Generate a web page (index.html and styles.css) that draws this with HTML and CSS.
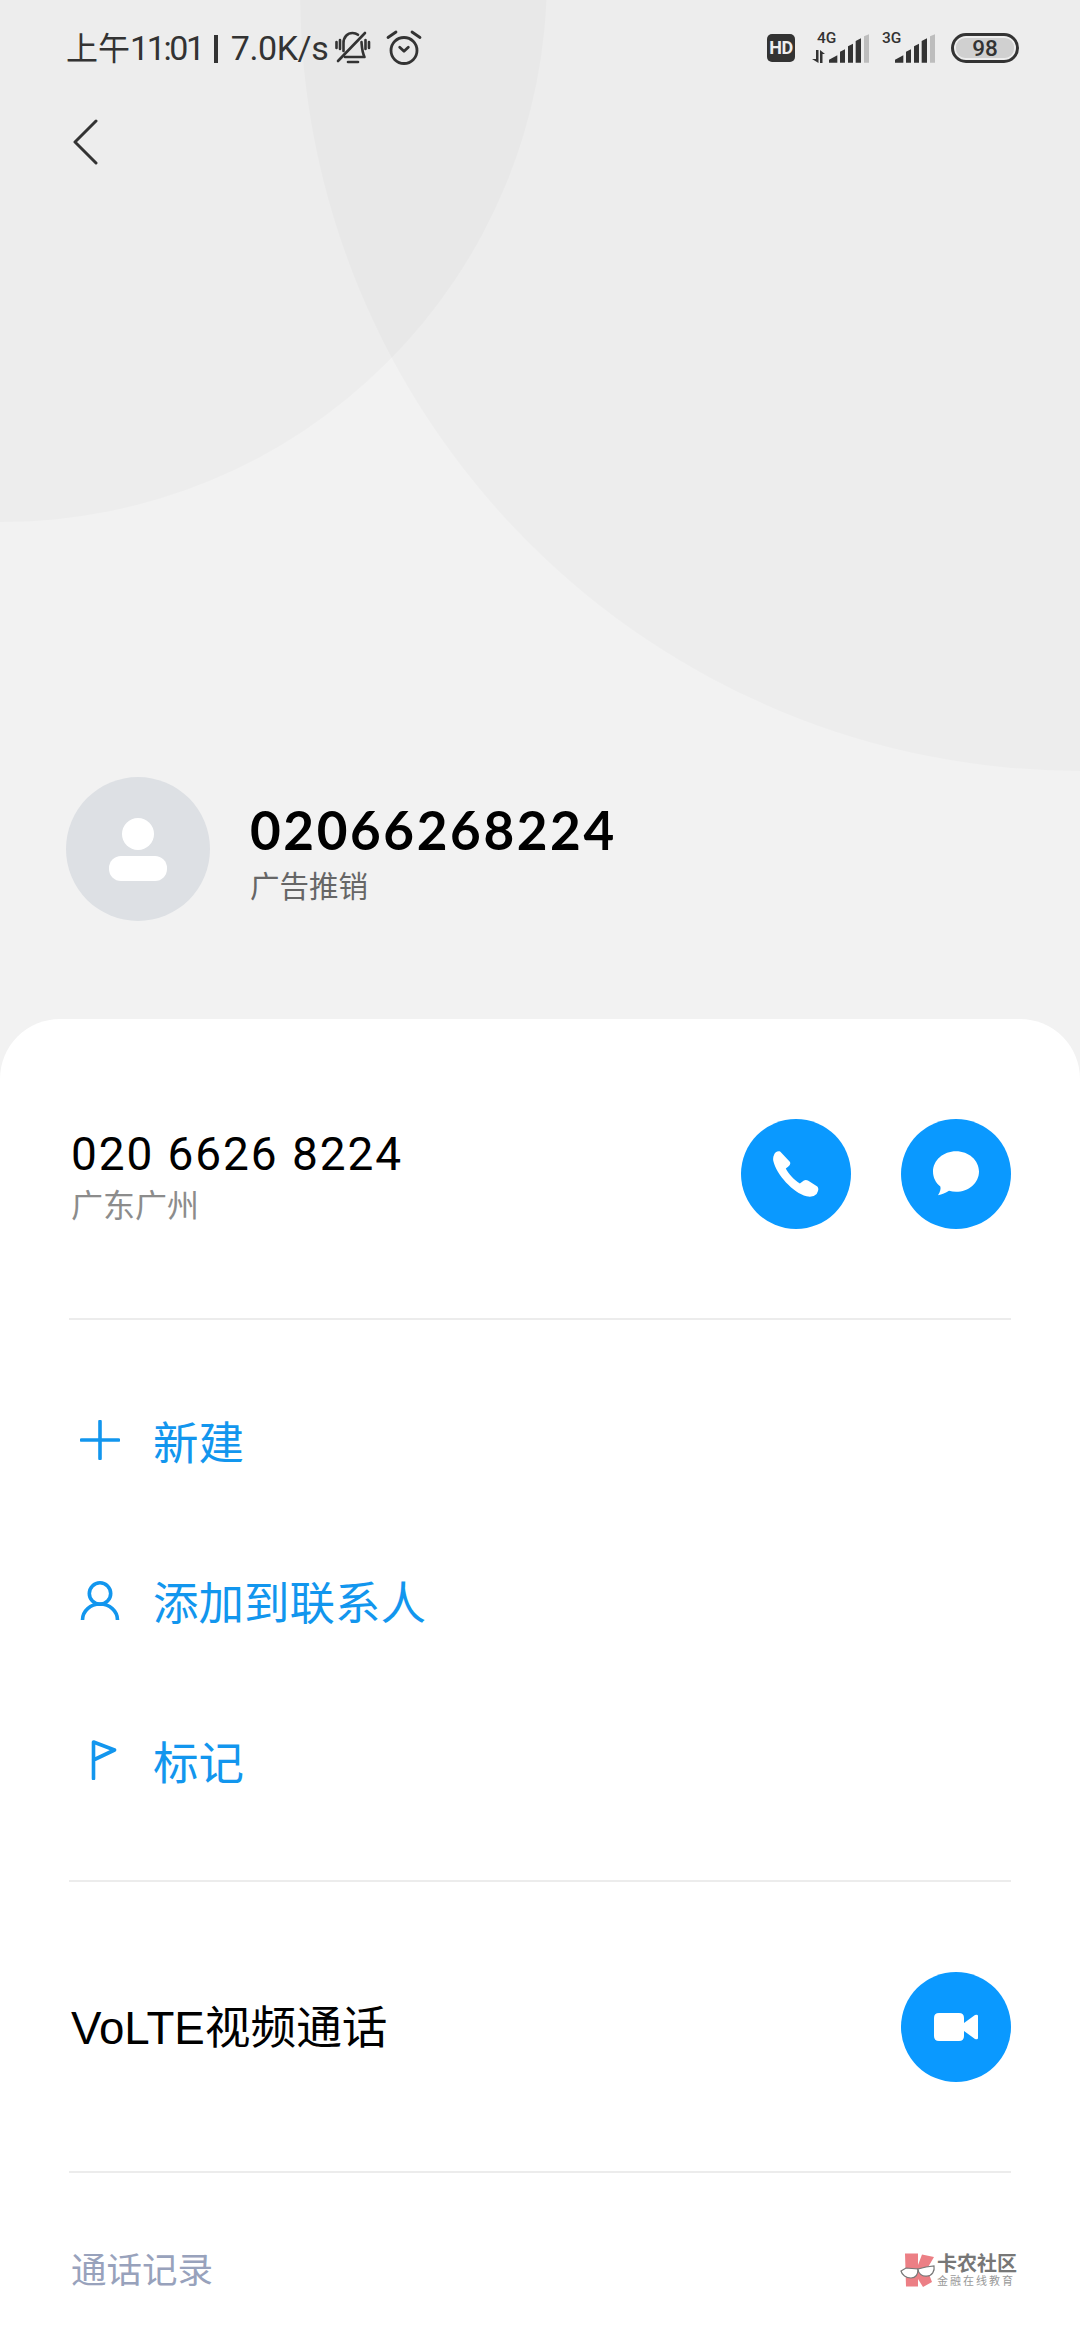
FILE: index.html
```html
<!DOCTYPE html>
<html lang="zh-CN">

<head>
    <meta charset="UTF-8">
    <meta name="viewport" content="width=device-width, initial-scale=1.0">
    <title>02066268224</title>
    <link rel="stylesheet" href="styles.css">
</head>

<body>
    <div class="screen">
        <header class="top">
            <div class="statusbar">
                <div class="status-left">
                    <span class="clock">上午<span class="clock-time">11:01</span></span>
                    <span class="speed-sep"></span>
                    <span class="speed">7.0K/s</span>
                    <!-- muted bell -->
                    <svg class="ic-bell" viewBox="0 0 36 36">
                        <g fill="none" stroke="#333" stroke-width="2.6" stroke-linecap="round" stroke-linejoin="round">
                            <path d="M8.500 21V13c0-6 4-10 9-10 2 0 4 .6 5.500 1.800" />
                            <path d="M26.500 12c.5 6 .5 10 3 15H10" />
                            <path d="M13 32h10" />
                            <path d="M1.500 12v6M5 10v9M30.500 10v9M34 12v6" />
                            <path d="M3 31L30 3" />
                        </g>
                    </svg>
                    <!-- alarm -->
                    <svg class="ic-alarm" viewBox="0 0 36 36">
                        <g fill="none" stroke="#333" stroke-width="2.800" stroke-linecap="round" stroke-linejoin="round">
                            <circle cx="18" cy="20.500" r="13" />
                            <path d="M13.700 17.300l4.300 4 4.300-4" />
                            <path d="M2 7.500L10 2M34 7.500L26 2" />
                        </g>
                    </svg>
                </div>
                <div class="status-right">
                    <span class="hd">HD</span>
                    <div class="signal sig-4g">
                        <span class="net">4G</span>
                        <svg class="arrows" viewBox="0 0 13 13">
                            <path d="M4 0h2.500v13L0 9h4zM8 13V0l5 4h-2.500v9z" fill="#333" />
                        </svg>
                        <svg class="bars" viewBox="0 0 120 85">
                            <path d="M0 76l25-13v22H0zM33 52l15-7v40H33zM57 36l15-8v57H57zM80 20l16-8v73H80z" fill="#333" />
                            <path d="M105 6l15-6v85h-15z" fill="#bdbdbd" />
                        </svg>
                    </div>
                    <div class="signal sig-3g">
                        <span class="net">3G</span>
                        <svg class="bars" viewBox="0 0 120 85">
                            <path d="M0 76l25-13v22H0zM33 52l15-7v40H33zM57 36l15-8v57H57zM80 20l16-8v73H80z" fill="#333" />
                            <path d="M105 6l15-6v85h-15z" fill="#bdbdbd" />
                        </svg>
                    </div>
                    <div class="battery"><span>98</span></div>
                </div>
            </div>

            <svg class="back" viewBox="0 0 26 46">
                <path d="M24 2L3 23l21 21" fill="none" stroke="#333" stroke-width="3" stroke-linecap="round" stroke-linejoin="round" />
            </svg>

            <div class="caller">
                <div class="avatar">
                    <span class="avatar-head"></span>
                    <span class="avatar-body"></span>
                </div>
                <div class="caller-info">
                    <div class="caller-num">02066268224</div>
                    <div class="caller-tag">广告推销</div>
                </div>
            </div>
        </header>

        <main class="card">
            <section class="number-row">
                <div class="number-text">
                    <div class="number">020 6626 8224</div>
                    <div class="place">广东广州</div>
                </div>
                <div class="actions">
                    <div class="round-btn">
                        <svg viewBox="0 0 137 137" class="ic-phone">
                            <path d="M3 12C5 4 15-2 22 2L50 32Q56 40 38 52C46 68 62 85 80 97L92 88Q98 84 104 88L132 106Q139 114 130 128Q120 139 100 135C60 125 10 70 1 30Q-1 20 3 12Z" fill="#fff" />
                        </svg>
                    </div>
                    <div class="round-btn">
                        <svg viewBox="0 0 138 134" class="ic-msg">
                            <path d="M69 0C107 0 138 27 138 61S107 122 69 122C62 122 55 121 48 119C38 125 27 130 15 132C22 122 24 112 22 106C8 95 0 79 0 61C0 27 31 0 69 0Z" fill="#fff" />
                        </svg>
                    </div>
                </div>
            </section>

            <section class="menu">
                <div class="menu-item">
                    <svg class="menu-ic" viewBox="0 0 40 40">
                        <path d="M1.500 20h37M20 1.500v37" fill="none" stroke="#1296ee" stroke-width="3.600" stroke-linecap="round" />
                    </svg>
                    <span>新建</span>
                </div>
                <div class="menu-item">
                    <svg class="menu-ic" viewBox="0 0 40 40">
                        <g fill="none" stroke="#1296ee" stroke-width="3.600">
                            <circle cx="20" cy="13.500" r="10.700" />
                            <path d="M2.500 40c0-9 8-16 17.500-16s17.500 7 17.500 16" />
                        </g>
                    </svg>
                    <span>添加到联系人</span>
                </div>
                <div class="menu-item">
                    <svg class="menu-ic" viewBox="0 0 40 40">
                        <path d="M13.500 38.500V2l21 8-21 10" fill="none" stroke="#1296ee" stroke-width="3.600" stroke-linecap="round" stroke-linejoin="round" />
                    </svg>
                    <span>标记</span>
                </div>
            </section>

            <section class="video-row">
                <div class="video-label">VoLTE视频通话</div>
                <div class="round-btn">
                    <svg viewBox="0 0 44 28" class="ic-video">
                        <path d="M5 0h20q5 0 5 5v18q0 5-5 5H5q-5 0-5-5V5q0-5 5-5zM30 10l11-8q3-1 3 1v22q0 2-3 1l-11-8z" fill="#fff" />
                    </svg>
                </div>
            </section>

            <section class="history">
                <div class="history-title">通话记录</div>
                <div class="watermark">
                    <svg class="wm-logo" viewBox="0 0 36 36">
                        <path d="M5 .5H18V12L22 1.500 34 4 27 16 32 29 23 34 18 26V33.500H6Z" fill="#ec7f85" />
                        <g fill="#fff" stroke="#777" stroke-width="1.200">
                            <path d="M1 18l5-3 12 1c0 5-2 9-7 9-5 0-9-3-10-7z" />
                            <path d="M18 16l8-2 8-1c1 5-2 10-7 10-5 1-9-3-9-7z" />
                        </g>
                    </svg>
                    <div class="wm-text">
                        <div class="wm-name">卡农社区</div>
                        <div class="wm-sub">金融在线教育</div>
                    </div>
                </div>
            </section>
        </main>
    </div>
</body></html>
```

FILE: styles.css
```css
* {
    box-sizing: border-box;
}

body {
    margin: 0;
    background: #fff;
    font-family: Roboto, "Noto Sans CJK SC", sans-serif;
}

.screen {
    position: relative;
    width: 1080px;
    height: 2340px;
    overflow: hidden;
    display: flex;
    flex-direction: column;
    background: #f2f2f2;
}

/* the two big pale circles behind the header */
.screen::before,
.screen::after {
    content: "";
    position: absolute;
    border-radius: 50%;
    background: rgba(0, 0, 0, .018);
}

.screen::before {
    left: 300px;
    top: -789px;
    width: 1560px;
    height: 1560px;
}

.screen::after {
    left: -543px;
    top: -568px;
    width: 1090px;
    height: 1090px;
}

/* top part */
.top {
    position: relative;
    z-index: 1;
    height: 1019px;
    flex: none;
    display: flex;
    flex-direction: column;
}

.statusbar {
    height: 96px;
    padding: 0 61px 0 66px;
    display: flex;
    justify-content: space-between;
    align-items: center;
    color: #333;
}

.status-left {
    display: flex;
    align-items: center;
    font-size: 32px;
    line-height: 40px;
}

.clock-time {
    font-size: 34px;
    letter-spacing: -2.4px;
}

.speed-sep {
    width: 4px;
    height: 28px;
    background: #333;
    margin: 2px 13px 0 11px;
}

.speed {
    font-size: 34px;
    letter-spacing: -.4px;
}

.ic-bell {
    width: 36px;
    height: 36px;
    margin-left: 7px;
}

.ic-alarm {
    width: 36px;
    height: 36px;
    margin-left: 15px;
}

.status-right {
    display: flex;
    align-items: center;
}

.hd {
    width: 28px;
    height: 28px;
    border-radius: 5px;
    background: #333;
    color: #eee;
    font-size: 18px;
    font-weight: 700;
    line-height: 28px;
    text-align: center;
    letter-spacing: -.5px;
}

.signal {
    position: relative;
    height: 30px;
    display: flex;
    align-items: flex-end;
    justify-content: flex-end;
}

.sig-4g {
    width: 57px;
    margin-left: 17px;
}

.sig-3g {
    width: 53px;
    margin-left: 13px;
}

.net {
    position: absolute;
    top: -3px;
    left: 5px;
    font-size: 15.500px;
    line-height: 16px;
    font-weight: 500;
}

.sig-3g .net {
    left: 0;
}

.arrows {
    position: absolute;
    left: 0;
    bottom: 0;
    width: 13px;
    height: 13px;
}

.bars {
    width: 40px;
    height: 29px;
}

.battery {
    width: 68px;
    height: 30px;
    margin-left: 16px;
    padding: 2px;
    border: 3px solid #333;
    border-radius: 15px;
    display: flex;
}

.battery span {
    flex: 1;
    border-radius: 9px;
    background: #d0d0d0;
    font-size: 22.500px;
    font-weight: 500;
    line-height: 20px;
    text-align: center;
}

.back {
    width: 26px;
    height: 46px;
    margin: 23px 0 0 72px;
}

.caller {
    display: flex;
    align-items: center;
    margin: 612px 0 0 66px;
}

.avatar {
    width: 144px;
    height: 144px;
    border-radius: 50%;
    background: #dde0e4;
    display: flex;
    flex-direction: column;
    align-items: center;
    justify-content: center;
    gap: 6px;
}

.avatar-head {
    width: 32px;
    height: 32px;
    border-radius: 50%;
    background: #fff;
}

.avatar-body {
    width: 58px;
    height: 25px;
    border-radius: 12px;
    background: #fff;
}

.caller-info {
    margin: 9px 0 0 40px;
}

.caller-num {
    font-family: Lato, "Noto Sans", sans-serif;
    font-size: 53px;
    font-weight: 700;
    line-height: 60px;
    letter-spacing: 2.6px;
    color: #000;
}

.caller-tag {
    margin-top: 6px;
    font-size: 29.500px;
    line-height: 42px;
    color: #666;
}

/* white card */
.card {
    position: relative;
    z-index: 1;
    flex: 1;
    background: #fff;
    border-radius: 60px 60px 0 0;
    padding: 0 69px;
}

.number-row {
    height: 301px;
    display: flex;
    justify-content: space-between;
    align-items: center;
    padding-left: 2px;
    border-bottom: 2px solid #ececec;
}

.number-text {
    margin-top: 16px;
}

.number {
    font-size: 46px;
    line-height: 56px;
    letter-spacing: 1.9px;
    color: #000;
}

.place {
    margin-top: 3px;
    font-size: 32px;
    line-height: 42px;
    color: #8c8c8c;
}

.actions {
    display: flex;
    gap: 50px;
    margin-top: 10px;
}

.round-btn {
    width: 110px;
    height: 110px;
    border-radius: 50%;
    background: #0a99ff;
    display: flex;
    align-items: center;
    justify-content: center;
}

.ic-phone {
    width: 46px;
    height: 46px;
}

.ic-msg {
    width: 46px;
    height: 45px;
}

.ic-video {
    width: 44px;
    height: 28px;
}

.menu {
    padding: 40px 0;
    border-bottom: 2px solid #ececec;
}

.menu-item {
    height: 160px;
    display: flex;
    align-items: center;
    font-size: 45.500px;
    color: #1296ee;
}

.menu-item span {
    margin-left: 33px;
}

.menu-ic {
    width: 40px;
    height: 40px;
    margin-left: 11px;
    flex: none;
}

.video-row {
    height: 291px;
    display: flex;
    justify-content: space-between;
    align-items: center;
    border-bottom: 2px solid #ececec;
    padding-left: 2px;
}

.video-label {
    margin-top: -5px;
    font-family: "Liberation Sans", "Noto Sans CJK SC", sans-serif;
    font-size: 45.700px;
    color: #000;
}

.history {
    display: flex;
    justify-content: space-between;
    align-items: center;
    padding: 74px 0 0 2px;
}

.history-title {
    font-size: 35.500px;
    line-height: 48px;
    color: #98a2bc;
}

.watermark {
    display: flex;
    align-items: center;
    margin-right: -6px;
}

.wm-logo {
    width: 36px;
    height: 36px;
}

.wm-text {
    margin-left: 1px;
    color: #777;
}

.wm-name {
    font-size: 20px;
    line-height: 21px;
    font-weight: 700;
}

.wm-sub {
    font-size: 11px;
    line-height: 14px;
    color: #999;
    letter-spacing: 2px;
}
```
